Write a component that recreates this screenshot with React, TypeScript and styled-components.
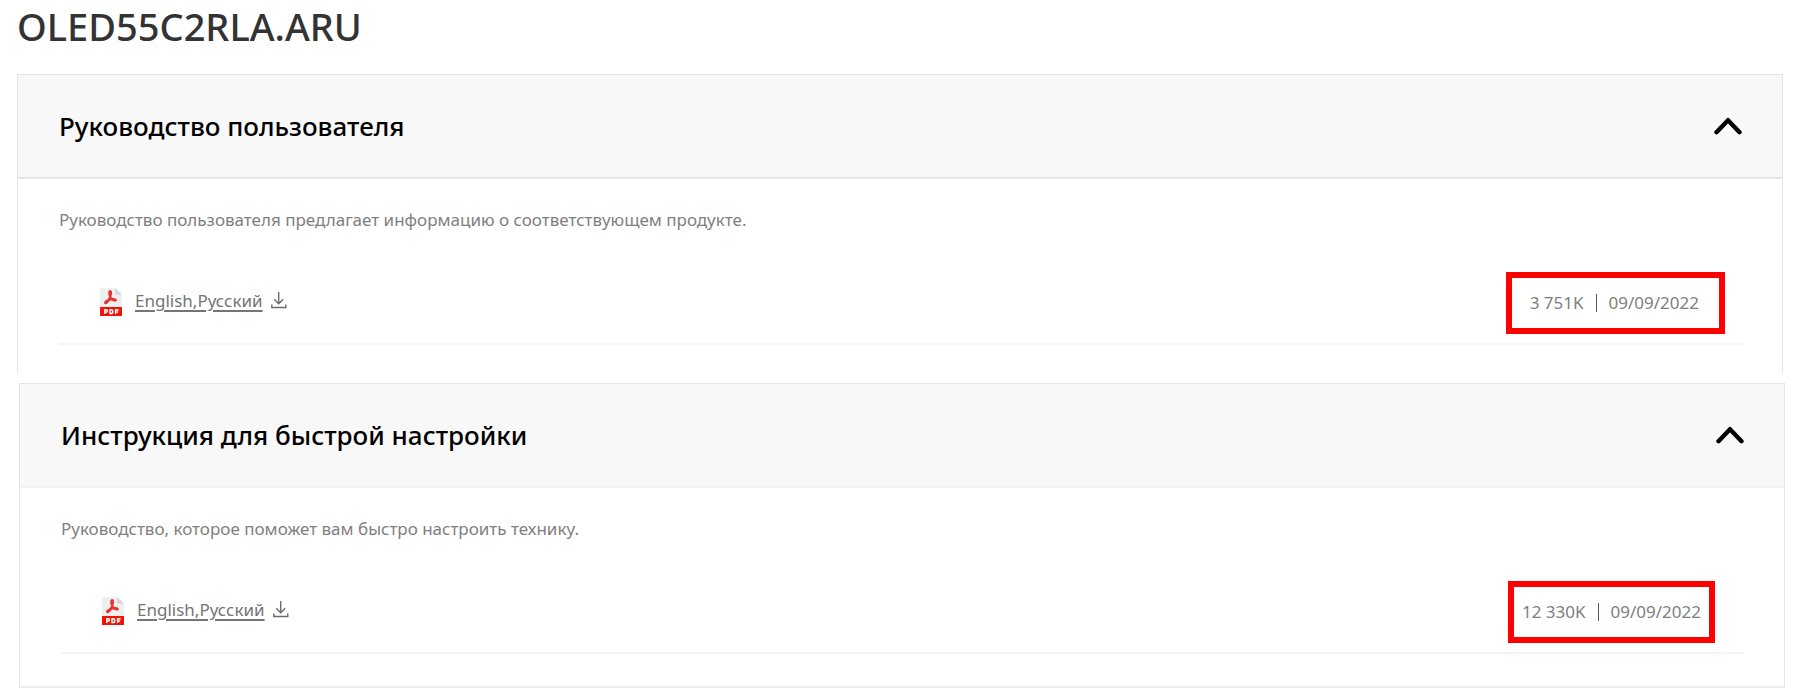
import React, { useState } from "react";
import styled, { createGlobalStyle } from "styled-components";

const GlobalStyle = createGlobalStyle`
  *, *::before, *::after { box-sizing: border-box; }
  body {
    margin: 0;
    background: #fff;
    color: #6b6b6b;
    font-family: "Noto Sans", "Open Sans", sans-serif;
  }
`;

const Page = styled.main`
  padding: 0 21px 0 17px;
`;

const ModelName = styled.h1`
  margin: 0;
  padding-bottom: 22px;
  color: #333;
  font-size: 38px;
  font-weight: 500;
  line-height: 52px;
`;

const Panel = styled.section<{ $continued?: boolean }>`
  border: 1px solid #e4e4e4;
  border-bottom: ${(p) => (p.$continued ? "0" : "2px solid #eee")};
  margin: ${(p) => (p.$continued ? "0 1px 10px 0" : "0 -1px 0 2px")};
`;

const PanelTitle = styled.h2`
  margin: 0;
`;

const PanelToggle = styled.button<{ $strong?: boolean }>`
  display: flex;
  align-items: center;
  justify-content: space-between;
  width: 100%;
  height: 104px;
  padding: 0 40px 0 41px;
  border: 0;
  border-bottom: 2px solid ${(p) => (p.$strong ? "#e6e6e6" : "#f2f2f2")};
  background: #f8f8f8;
  color: #000;
  font-family: inherit;
  font-size: 26px;
  font-weight: 500;
  line-height: 40px;
  text-align: left;
  cursor: pointer;
`;

const PanelBody = styled.div<{ $continued?: boolean }>`
  padding: 28px 40px ${(p) => (p.$continued ? "28px" : "32px")} 41px;
`;

const Description = styled.p`
  margin: 0;
  color: #808080;
  font-size: 17px;
  line-height: 26px;
`;

const FileList = styled.ul`
  margin: 38px 0 0;
  padding: 0;
  list-style: none;
`;

const FileRow = styled.li`
  display: flex;
  align-items: center;
  justify-content: space-between;
  height: 74px;
  padding: 0 0 8px 41px;
  border-bottom: 2px solid #f4f4f4;
`;

const FileLink = styled.a`
  display: flex;
  align-items: center;
  padding-bottom: 2px;
  color: #757575;
  font-size: 17px;
  line-height: 28px;
  text-decoration: none;
`;

const LinkText = styled.span`
  margin: 0 8px 2px 13px;
  text-decoration: underline;
  text-decoration-thickness: 2px;
  text-underline-offset: 3px;
  text-decoration-skip-ink: auto;
`;

const FileMeta = styled.div<{ $wide?: boolean }>`
  display: flex;
  align-items: center;
  height: 62px;
  margin-right: ${(p) => (p.$wide ? "17px" : "29px")};
  padding: ${(p) => (p.$wide ? "0 20px 0 18px" : "0 8px")};
  border: 6px solid #f00;
  color: #808080;
  font-size: 17px;
  line-height: 24px;
`;

const FileDate = styled.time`
  display: flex;
  align-items: center;

  &::before {
    content: "";
    width: 1px;
    height: 18px;
    margin: 0 12px;
    background: #555;
  }
`;

const ChevronUp = ({ open }: { open: boolean }) => (
  <svg width="28" height="18" viewBox="0 0 28 18" aria-hidden="true">
    <path
      d={open ? "M2.5 15.2 14 3.2l11.5 12" : "M2.5 3.2 14 15.2l11.5-12"}
      fill="none"
      stroke="#000"
      strokeWidth="4.4"
      strokeLinecap="round"
      strokeLinejoin="round"
    />
  </svg>
);

const PdfIcon = () => (
  <svg width="22" height="28" viewBox="0 0 22 28" aria-hidden="true">
    <path d="M0 0h15l7 6.5V20H0z" fill="#efefef" />
    <path d="M15 0l7 6.5h-7z" fill="#d6d6d6" />
    <path
      d="M9.8 3.2c1.6-.6 1.5 2.2.5 5.2-1 3-3.3 6.6-4.6 6.8-1.3 0-.5-2 2.3-3 3.2-1.3 7.6-1.5 7.8-.3.2 1.2-3.1.8-5-2C9.2 7.6 8.7 3.8 9.8 3.2z"
      fill="none"
      stroke="#e8322c"
      strokeWidth="2.1"
      strokeLinejoin="round"
    />
    <path d="M0 19h22v9H0z" fill="#ee1408" />
    <path
      d="M4.8 26v-4.3h1.5a1.1 1.1 0 0 1 0 2.4H5M10 21.8h.9c2.6 0 2.6 3.7 0 3.7H10zM15.6 26v-4.3H18.6M15.6 24h2.5"
      fill="none"
      stroke="#fff"
      strokeWidth="1.4"
    />
  </svg>
);

const DownloadGlyph = styled.svg`
  margin-bottom: 4px;
`;

const DownloadIcon = () => (
  <DownloadGlyph width="16" height="17" viewBox="0 0 16 17" aria-hidden="true">
    <path
      d="M7.7 0v11.5M3.2 7.2l4.5 4.5 4.5-4.5M.8 12.5v3h14v-3"
      fill="none"
      stroke="#6b6b6b"
      strokeWidth="1.4"
    />
  </DownloadGlyph>
);

interface Manual {
  id: string;
  title: string;
  description: string;
  languages: string;
  size: string;
  date: string;
  isoDate: string;
}

const manuals: Manual[] = [
  {
    id: "owner",
    title: "Руководство пользователя",
    description: "Руководство пользователя предлагает информацию о соответствующем продукте.",
    languages: "English,Русский",
    size: "3 751K",
    date: "09/09/2022",
    isoDate: "2022-09-09",
  },
  {
    id: "quick-setup",
    title: "Инструкция для быстрой настройки",
    description: "Руководство, которое поможет вам быстро настроить технику.",
    languages: "English,Русский",
    size: "12 330K",
    date: "09/09/2022",
    isoDate: "2022-09-09",
  },
];

function ManualPanel({ manual, first }: { manual: Manual; first: boolean }) {
  const [open, setOpen] = useState(true);
  return (
    <Panel $continued={first}>
      <PanelTitle>
        <PanelToggle
          type="button"
          $strong={first}
          aria-expanded={open}
          aria-controls={manual.id}
          onClick={() => setOpen(!open)}
        >
          {manual.title}
          <ChevronUp open={open} />
        </PanelToggle>
      </PanelTitle>
      {open && (
        <PanelBody id={manual.id} $continued={first}>
          <Description>{manual.description}</Description>
          <FileList>
            <FileRow>
              <FileLink href="#download">
                <PdfIcon />
                <LinkText>{manual.languages}</LinkText>
                <DownloadIcon />
              </FileLink>
              <FileMeta $wide={first}>
                <span>{manual.size}</span>
                <FileDate dateTime={manual.isoDate}>{manual.date}</FileDate>
              </FileMeta>
            </FileRow>
          </FileList>
        </PanelBody>
      )}
    </Panel>
  );
}

export default function App() {
  return (
    <>
      <GlobalStyle />
      <Page>
        <ModelName>OLED55C2RLA.ARU</ModelName>
        {manuals.map((manual, index) => (
          <ManualPanel key={manual.id} manual={manual} first={index === 0} />
        ))}
      </Page>
    </>
  );
}
